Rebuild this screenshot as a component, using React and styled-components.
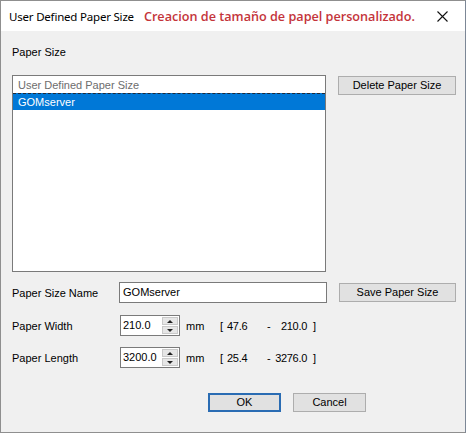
import React from "react";
import styled, { createGlobalStyle } from "styled-components";

const Global = createGlobalStyle`
  html, body { margin: 0; padding: 0; background: #ffffff; }
  body { font-family: "Liberation Sans", Arial, sans-serif; font-size: 11px; color: #000; }
`;

const Window = styled.div`
  width: 464px;
  height: 431px;
  border: 1px solid #8f8f8f;
  border-right-color: #7c8796;
  background: #f0f0f0;
  display: flex;
  flex-direction: column;
  overflow: hidden;
`;

const TitleBar = styled.div`
  height: 30px;
  background: #ffffff;
  display: flex;
  align-items: center;
  padding-left: 8px;
  flex-shrink: 0;
`;

const Title = styled.span`
  font-family: "Noto Sans", "Liberation Sans", sans-serif;
  font-size: 11.5px;
  color: #000;
  letter-spacing: -0.2px;
`;

const Note = styled.span`
  margin-left: 10px;
  font-family: "Open Sans", "Noto Sans", sans-serif;
  font-weight: 600;
  font-size: 12.65px;
  color: #c4343a;
`;

const CloseBtn = styled.div`
  margin-left: auto;
  width: 46px;
  height: 30px;
  display: flex;
  align-items: center;
  justify-content: center;
`;

const Body = styled.div`
  padding: 0 9px 0 11px;
  display: flex;
  flex-direction: column;
`;

const SectionLabel = styled.div`
  margin-top: 15px;
  height: 13px;
  line-height: 13px;
`;

const TopRow = styled.div`
  margin-top: 16px;
  display: flex;
  align-items: flex-start;
`;

const ListBox = styled.div`
  width: 312px;
  height: 195px;
  border: 1px solid #7a7a7a;
  background: #fff;
`;

const ListItem = styled.div`
  height: 16px;
  line-height: 16px;
  padding-left: 5px;
  color: ${(p) => (p.$selected ? "#ffffff" : "#6d6d6d")};
  background: ${(p) => (p.$selected ? "#0078d7" : "transparent")};
  border-top: 1px ${(p) => (p.$selected ? "dashed #1e2a3a" : "solid transparent")};
`;

const Button = styled.button`
  width: ${(p) => p.$w || 118}px;
  height: ${(p) => p.$h || 19}px;
  margin: 0;
  padding: 0;
  background: #e1e1e1;
  border: ${(p) => (p.$default ? "2px solid #2a6cb3" : "1px solid #adadad")};
  font-family: "Liberation Sans", Arial, sans-serif;
  font-size: 11px;
  color: #000;
  line-height: 1;
`;

const SideButton = styled(Button)`
  margin-left: 12px;
  margin-top: ${(p) => p.$mt || 0}px;
`;

const FormRow = styled.div`
  margin-top: ${(p) => p.$mt}px;
  display: flex;
  align-items: center;
  height: ${(p) => p.$h || 21}px;
`;

const Label = styled.div`
  width: 108px;
`;

const TextInput = styled.div`
  width: 203px;
  height: 19px;
  border: 1px solid #7a7a7a;
  background: #fff;
  line-height: 19px;
  padding-left: 3px;
  flex-shrink: 0;
`;

const SpinBox = styled.div`
  width: 58px;
  height: 19px;
  border: 1px solid #7a7a7a;
  background: #fff;
  display: flex;
  align-items: stretch;
  flex-shrink: 0;
`;

const SpinText = styled.div`
  flex: 1;
  line-height: 19px;
  padding-left: 2px;
`;

const SpinButtons = styled.div`
  width: 16px;
  display: flex;
  flex-direction: column;
  gap: 1px;
  padding: 1px 1px 1px 0;
`;

const SpinArrow = styled.div`
  flex: 1;
  background: #e6e6e6;
  border: 1px solid #c9c9c9;
  display: flex;
  align-items: center;
  justify-content: center;
  &::after {
    content: "";
    width: 0;
    height: 0;
    border-left: 3px solid transparent;
    border-right: 3px solid transparent;
    ${(p) => (p.$down ? "border-top: 3px solid #222;" : "border-bottom: 3px solid #222;")}
  }
`;

const Unit = styled.div`
  margin-left: 6px;
  width: 34px;
`;

const Range = styled.div`
  display: grid;
  grid-template-columns: 7px 40px 6px 34px auto;
  align-items: center;
`;

const Num = styled.span`
  letter-spacing: -0.3px;
  white-space: nowrap;
  text-align: ${(p) => p.$align || "left"};
`;

const Bracket = styled.span`
  margin-left: 6px;
`;

const ButtonRow = styled.div`
  margin-top: 25px;
  display: flex;
  gap: 12px;
  padding-left: 196px;
`;

const CloseIcon = () => (
  <svg width="11" height="11" viewBox="0 0 11 11">
    <path d="M0.5 0.5 L10.5 10.5 M10.5 0.5 L0.5 10.5" stroke="#111" strokeWidth="1.1" fill="none" />
  </svg>
);

const SpinField = ({ value }) => (
  <SpinBox>
    <SpinText>{value}</SpinText>
    <SpinButtons>
      <SpinArrow />
      <SpinArrow $down />
    </SpinButtons>
  </SpinBox>
);

const RangeText = ({ min, max }) => (
  <Range>
    <span>[</span>
    <Num>{min}</Num>
    <span>-</span>
    <Num $align="right">{max}</Num>
    <Bracket>]</Bracket>
  </Range>
);

export default function App() {
  return (
    <>
      <Global />
      <Window>
        <TitleBar>
          <Title>User Defined Paper Size</Title>
          <Note>Creacion de tamaño de papel personalizado.</Note>
          <CloseBtn>
            <CloseIcon />
          </CloseBtn>
        </TitleBar>
        <Body>
          <SectionLabel>Paper Size</SectionLabel>
          <TopRow>
            <ListBox>
              <ListItem>User Defined Paper Size</ListItem>
              <ListItem $selected>GOMserver</ListItem>
            </ListBox>
            <SideButton $mt={1}>Delete Paper Size</SideButton>
          </TopRow>
          <FormRow $mt={10}>
            <Label>Paper Size Name</Label>
            <TextInput>GOMserver</TextInput>
            <SideButton $h={19}>Save Paper Size</SideButton>
          </FormRow>
          <FormRow $mt={12}>
            <Label>Paper Width</Label>
            <SpinField value="210.0" />
            <Unit>mm</Unit>
            <RangeText min="47.6" max="210.0" />
          </FormRow>
          <FormRow $mt={11}>
            <Label>Paper Length</Label>
            <SpinField value="3200.0" />
            <Unit>mm</Unit>
            <RangeText min="25.4" max="3276.0" />
          </FormRow>
          <ButtonRow>
            <Button $w={73} $h={19} $default>OK</Button>
            <Button $w={73} $h={19}>Cancel</Button>
          </ButtonRow>
        </Body>
      </Window>
    </>
  );
}
